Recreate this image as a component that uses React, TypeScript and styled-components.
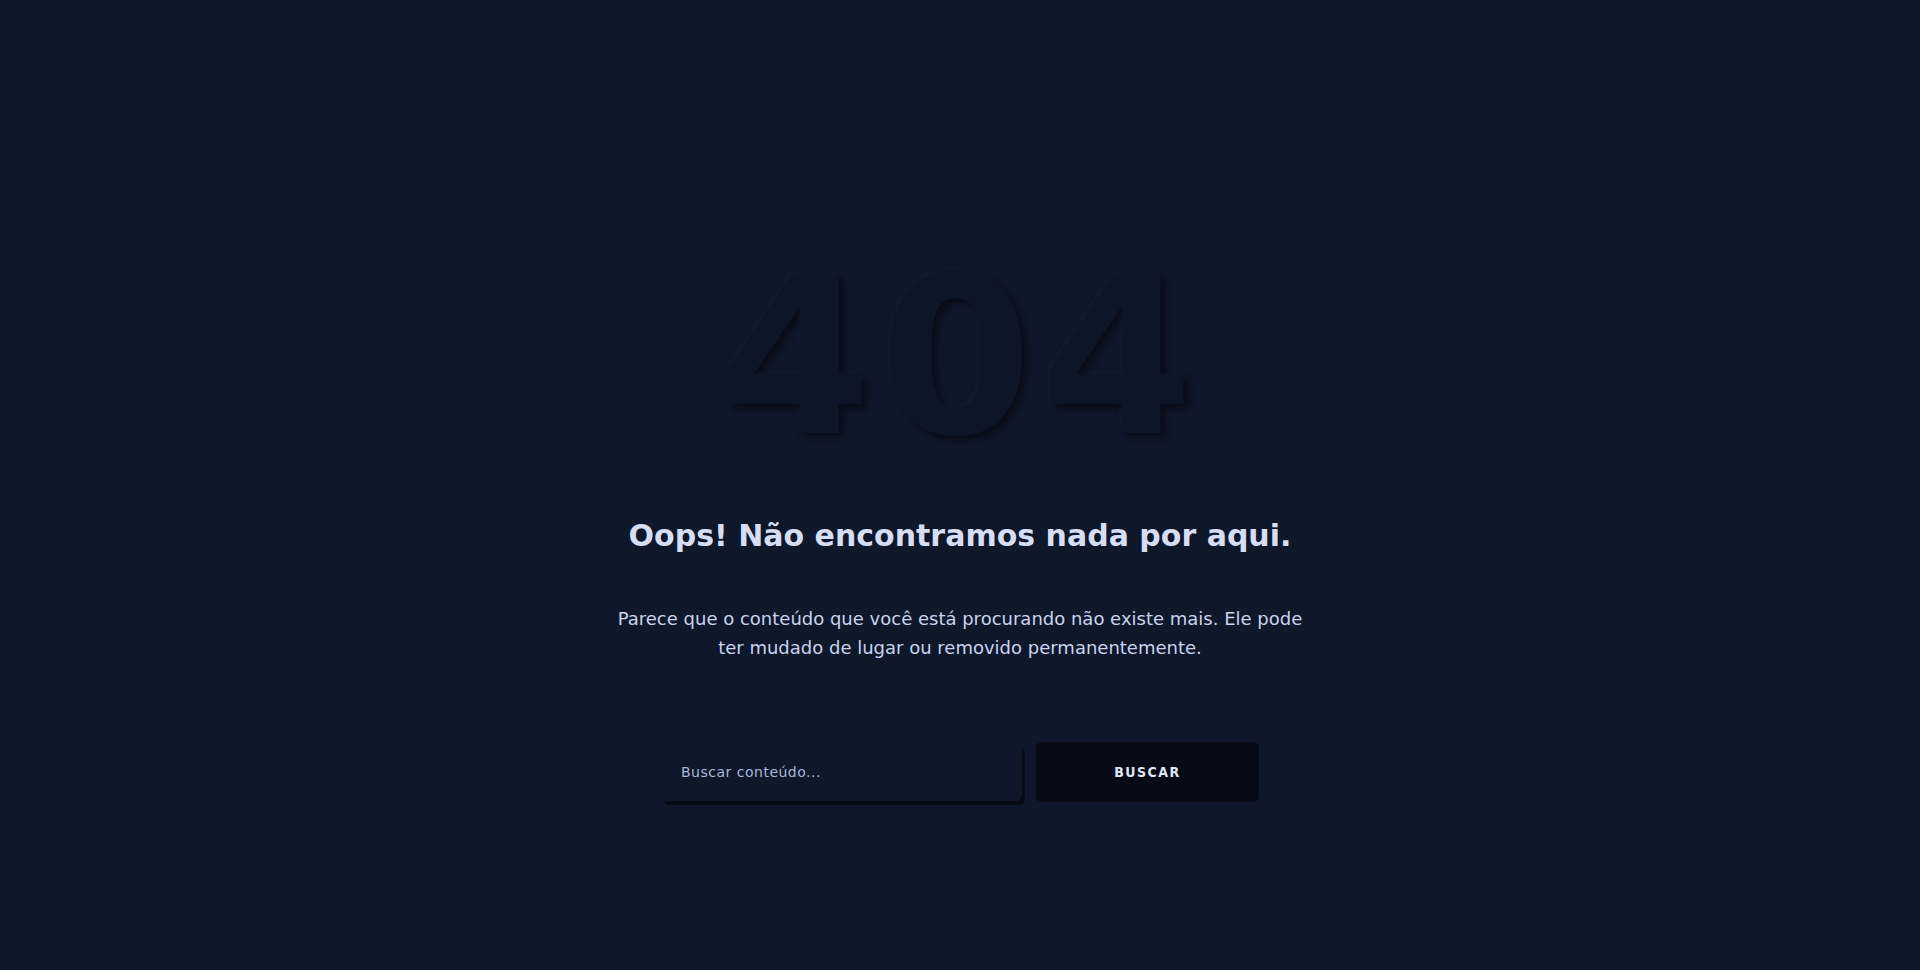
import styled, { createGlobalStyle } from 'styled-components'

const GlobalStyle = createGlobalStyle`
  html, body {
    margin: 0;
    padding: 0;
    background-color: #0f172a;
  }
  body {
    font-family: 'DejaVu Sans', 'Liberation Sans', sans-serif;
  }
`

const Page = styled.main`
  display: flex;
  flex-direction: column;
  align-items: center;
  min-height: 100vh;
  padding-top: 247px;
  box-sizing: border-box;
  background-color: #0f172a;
`

const Code = styled.h1`
  margin: 0;
  font-family: 'DejaVu Sans', sans-serif;
  font-size: 220px;
  line-height: 1;
  font-weight: 700;
  letter-spacing: 8px;
  color: #0d1627;
  text-shadow: 5px 5px 6px rgba(0, 0, 0, 0.45), -2px -2px 4px rgba(40, 55, 90, 0.12);
  user-select: none;
`

const Title = styled.h2`
  margin: 51px 0 0;
  font-size: 30px;
  font-weight: 700;
  color: #d6def4;
`

const Text = styled.p`
  margin: 51px 0 0;
  max-width: 690px;
  font-size: 18px;
  line-height: 29px;
  text-align: center;
  color: #c9d3ee;
`

const SearchForm = styled.form`
  display: flex;
  align-items: center;
  gap: 14px;
  margin-top: 80px;
`

const SearchInput = styled.input`
  width: 361px;
  height: 57px;
  padding: 0 20px;
  box-sizing: border-box;
  border: none;
  border-radius: 6px;
  background-color: #0f172a;
  box-shadow: 3px 4px 0 #070b14;
  color: #c9d3ee;
  font-family: 'DejaVu Sans', sans-serif;
  font-size: 14px;
  letter-spacing: 0.5px;
  outline: none;

  &::placeholder {
    color: #a9b8dc;
  }
`

const SearchButton = styled.button`
  width: 223px;
  height: 60px;
  border: none;
  border-radius: 6px;
  background-color: #070b15;
  color: #dfe6f7;
  font-family: 'DejaVu Sans Condensed', 'DejaVu Sans', sans-serif;
  font-size: 14px;
  font-weight: 700;
  letter-spacing: 1.5px;
  cursor: pointer;
`

export default function App() {
  return (
    <>
      <GlobalStyle />
      <Page>
        <Code>404</Code>
        <Title>Oops! Não encontramos nada por aqui.</Title>
        <Text>
          Parece que o conteúdo que você está procurando não existe mais. Ele pode ter mudado de
          lugar ou removido permanentemente.
        </Text>
        <SearchForm onSubmit={e => e.preventDefault()}>
          <SearchInput type="text" placeholder="Buscar conteúdo..." />
          <SearchButton type="submit">BUSCAR</SearchButton>
        </SearchForm>
      </Page>
    </>
  )
}
